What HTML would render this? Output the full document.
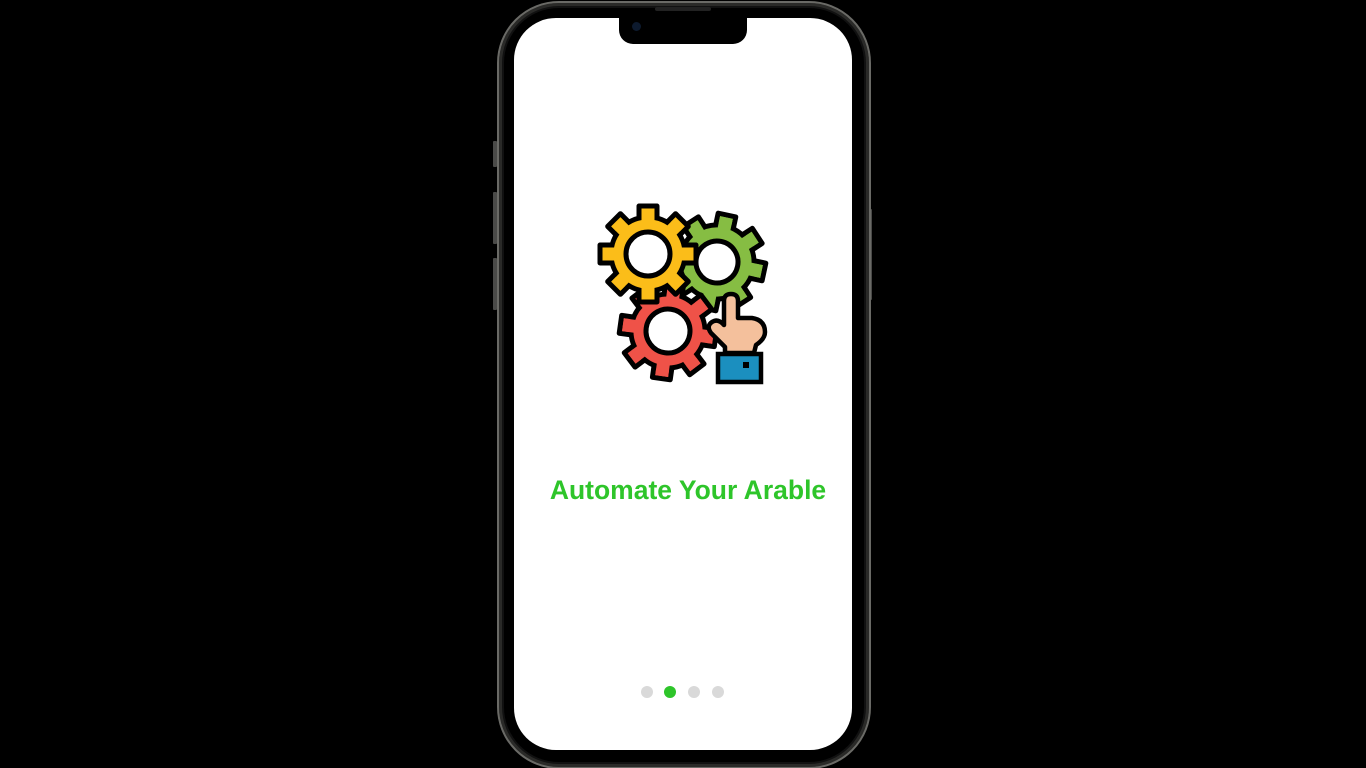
<!DOCTYPE html>
<html><head><meta charset="utf-8"><style>
html,body{margin:0;padding:0;background:#000;width:1366px;height:768px;overflow:hidden;position:relative;font-family:"Liberation Sans",sans-serif}
.frame{position:absolute;left:497px;top:1px;width:370px;height:764px;border-radius:62px;border:2px solid #6a6a66;box-shadow:inset 0 0 0 3px #2a2a28, inset 0 0 0 5px #111;background:#000}
.screen{position:absolute;left:514px;top:18px;width:338px;height:732px;background:#fff;border-radius:42px;overflow:hidden}
.notch{position:absolute;left:619px;top:14px;width:128px;height:30px;background:#000;border-radius:0 0 14px 14px}
.cam{position:absolute;left:632px;top:22px;width:9px;height:9px;border-radius:50%;background:#0d1a2e}
.spk{position:absolute;left:655px;top:7px;width:56px;height:4px;border-radius:3px;background:#222}
.btn{position:absolute;background:#4a4a48;border-radius:1px}
.title{position:absolute;left:519px;width:338px;top:474px;text-align:center;color:#2ec52a;font-weight:bold;font-size:26.5px;line-height:32px}
.dot{position:absolute;top:686px;width:12px;height:12px;border-radius:50%;background:#d9d9d9}
</style></head><body>
<div class="btn" style="left:493px;top:141px;width:4px;height:26px"></div>
<div class="btn" style="left:493px;top:192px;width:4px;height:52px"></div>
<div class="btn" style="left:493px;top:258px;width:4px;height:52px"></div>
<div class="btn" style="left:868px;top:209px;width:4px;height:91px"></div>
<div class="frame"></div>
<div class="screen"></div>
<div class="notch"></div>
<div class="spk"></div>
<div class="cam"></div>
<svg style="position:absolute;left:0;top:0" width="1366" height="768">
<defs>
<g id="t1"><rect x="-9" y="-48" width="18" height="16" fill="currentColor" stroke="#000" stroke-width="5" stroke-linejoin="round"/></g>
<g id="t2"><rect x="-6.5" y="-45.5" width="13" height="13" fill="currentColor"/></g>
<g id="gear">
<use href="#t1"/><use href="#t1" transform="rotate(45)"/><use href="#t1" transform="rotate(90)"/><use href="#t1" transform="rotate(135)"/>
<use href="#t1" transform="rotate(180)"/><use href="#t1" transform="rotate(225)"/><use href="#t1" transform="rotate(270)"/><use href="#t1" transform="rotate(315)"/>
<circle r="37" fill="currentColor" stroke="#000" stroke-width="5"/>
<use href="#t2"/><use href="#t2" transform="rotate(45)"/><use href="#t2" transform="rotate(90)"/><use href="#t2" transform="rotate(135)"/>
<use href="#t2" transform="rotate(180)"/><use href="#t2" transform="rotate(225)"/><use href="#t2" transform="rotate(270)"/><use href="#t2" transform="rotate(315)"/>
</g>
</defs>
<g transform="translate(717,262) rotate(12)" style="color:#86bd43">
<use href="#gear"/><circle r="21" fill="#fff" stroke="#000" stroke-width="5"/></g>
<g transform="translate(668,331) rotate(8)" style="color:#ef5248">
<use href="#gear"/><circle r="22" fill="#fff" stroke="#000" stroke-width="5"/></g>
<g transform="translate(648,254) rotate(0)" style="color:#fbbd19">
<use href="#gear"/><circle r="22" fill="#fff" stroke="#000" stroke-width="5"/></g>
<path d="M725,347 L711,333 Q706,326 712,322 Q718,318 724,325 L724,301 Q724,294 731,294 Q738,294 738,301 L738,318 L752,318 Q765,320 765,332 Q765,339 756,345 L754,353 L725,353 Z" fill="#f4c09c" stroke="#000" stroke-width="4.5" stroke-linejoin="round"/>
<rect x="718" y="354" width="43" height="28" fill="#1b8fbf" stroke="#000" stroke-width="4.5"/>
<rect x="743" y="362" width="6" height="6" fill="#000"/>
</svg>
<div class="title">Automate Your Arable</div>
<div class="dot" style="left:641px"></div>
<div class="dot" style="left:664px;background:#2ec52a"></div>
<div class="dot" style="left:688px"></div>
<div class="dot" style="left:712px"></div>
</body></html>
